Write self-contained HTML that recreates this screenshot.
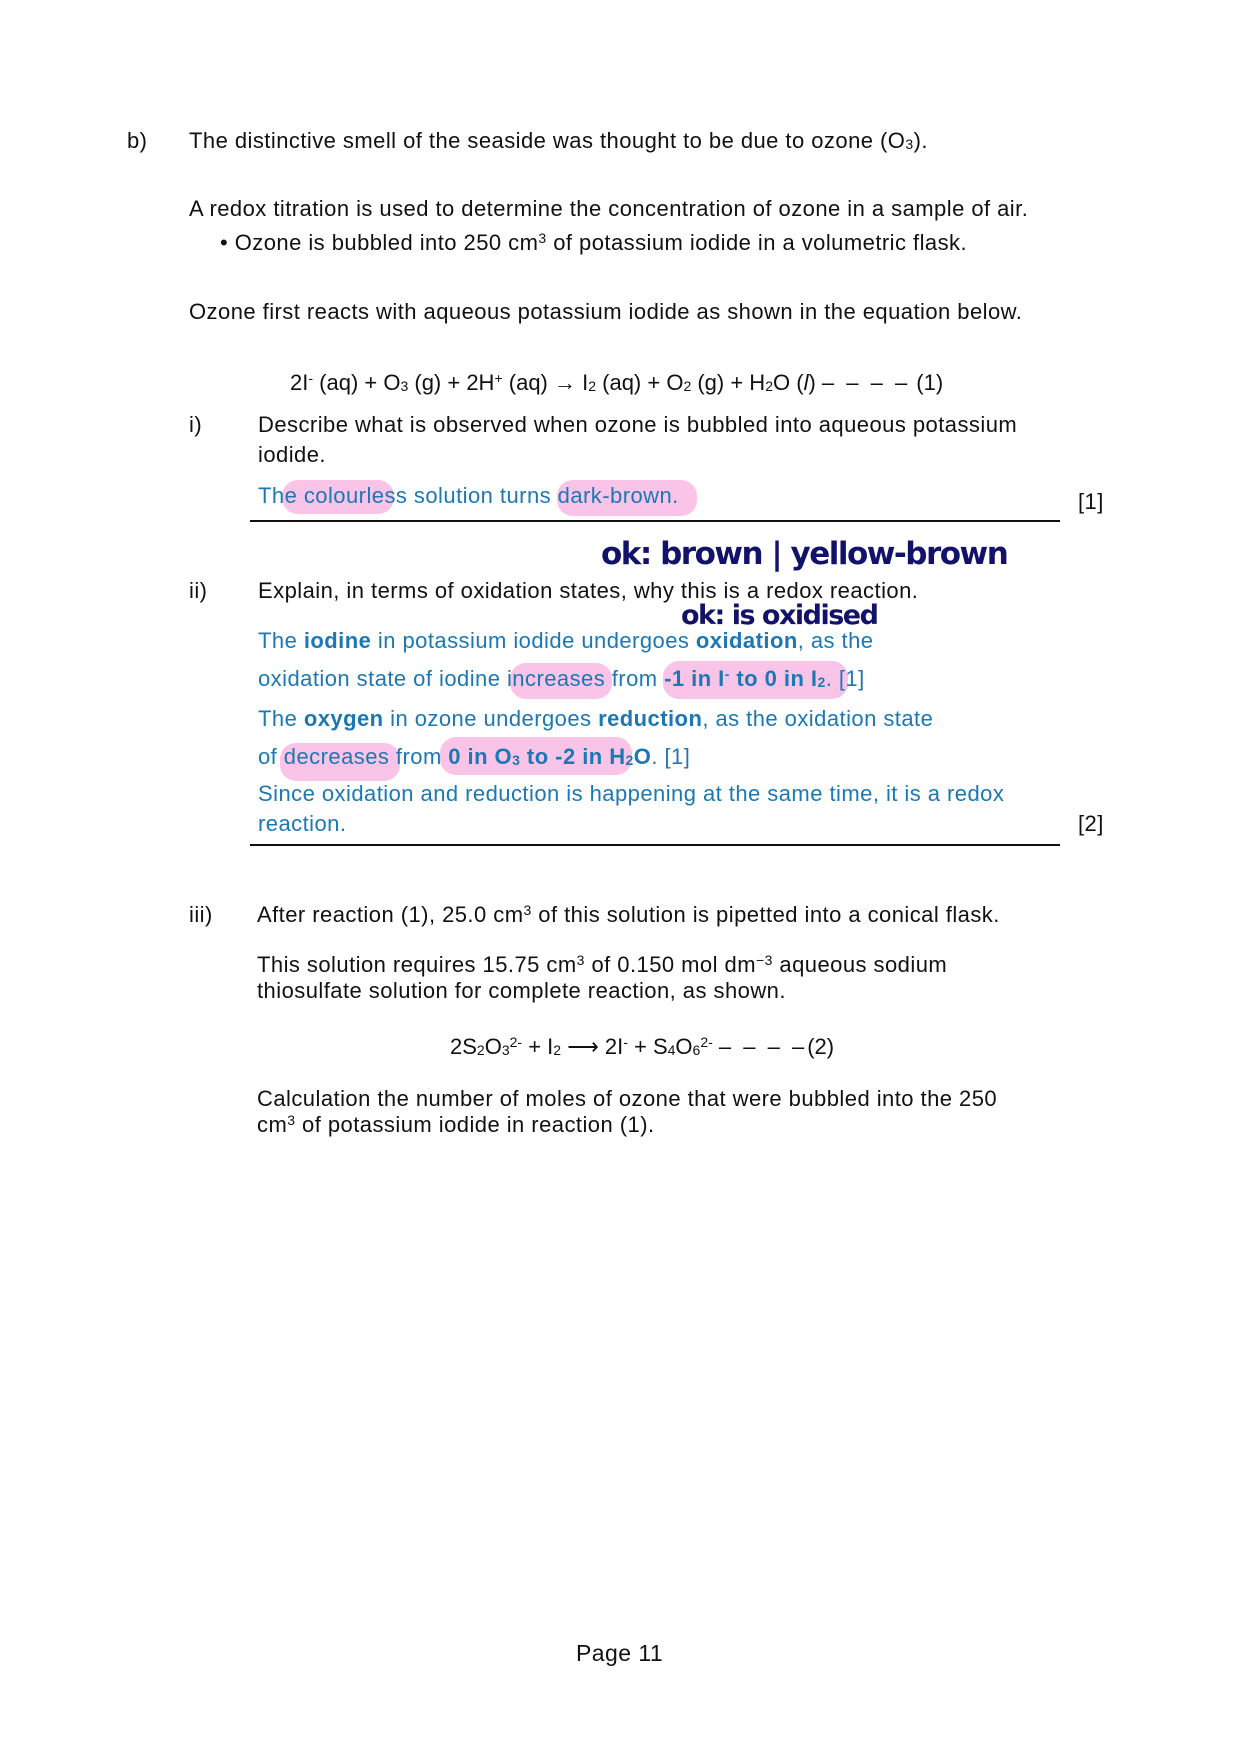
<!DOCTYPE html>
<html><head><meta charset="utf-8"><style>
body{margin:0;width:1241px;height:1756px;background:#fff;position:relative;font-family:"Liberation Sans",Arial,sans-serif;font-size:22px;letter-spacing:0.45px;color:#111;overflow:hidden}
.t{position:absolute;white-space:nowrap;line-height:26px}
.b{color:#1b78b4}
sub,sup{font-size:14px;line-height:0}
sub{vertical-align:-1px}
sup{vertical-align:7px}
.hl{position:absolute;background:#f9c4e8;border-radius:16px}
.hw{position:absolute;white-space:nowrap;color:#12126a;font-family:"DejaVu Sans",sans-serif;font-weight:bold;letter-spacing:-1.5px}
.ln{position:absolute;height:2px;background:#111}
.eq{letter-spacing:0}
.d{letter-spacing:3px}
</style></head><body>
<div class="hl" style="left:282px;top:480px;width:112px;height:34px"></div>
<div class="hl" style="left:557px;top:480px;width:140px;height:36px"></div>
<div class="hl" style="left:510px;top:663px;width:102px;height:36px"></div>
<div class="hl" style="left:663px;top:661px;width:185px;height:38px"></div>
<div class="hl" style="left:280px;top:743px;width:120px;height:38px"></div>
<div class="hl" style="left:440px;top:737px;width:192px;height:38px"></div>

<div class="t" style="left:127px;top:128px">b)</div>
<div class="t" style="left:189px;top:128px">The distinctive smell of the seaside was thought to be due to ozone (O<sub>3</sub>).</div>
<div class="t" style="left:189px;top:196px">A redox titration is used to determine the concentration of ozone in a sample of air.</div>
<div class="t" style="left:220px;top:230px">• Ozone is bubbled into 250 cm<sup>3</sup> of potassium iodide in a volumetric flask.</div>
<div class="t" style="left:189px;top:299px">Ozone first reacts with aqueous potassium iodide as shown in the equation below.</div>
<div class="t eq" style="left:290px;top:370px">2I<sup>-</sup> (aq) + O<sub>3</sub> (g) + 2H<sup>+</sup> (aq) → I<sub>2</sub> (aq) + O<sub>2</sub> (g) + H<sub>2</sub>O (<i>l</i>) <span class="d">– – – –</span> (1)</div>
<div class="t" style="left:189px;top:412px">i)</div>
<div class="t" style="left:258px;top:412px">Describe what is observed when ozone is bubbled into aqueous potassium</div>
<div class="t" style="left:258px;top:442px">iodide.</div>
<div class="t b" style="left:258px;top:483px">The colourless solution turns dark-brown.</div>
<div class="t" style="left:1078px;top:489px">[1]</div>
<div class="ln" style="left:250px;top:520px;width:810px"></div>
<div class="hw" style="left:601px;top:536px;font-size:31px">ok: brown | yellow-brown</div>
<div class="t" style="left:189px;top:578px">ii)</div>
<div class="t" style="left:258px;top:578px">Explain, in terms of oxidation states, why this is a redox reaction.</div>
<div class="hw" style="left:681px;top:600px;font-size:27px">ok: is oxidised</div>
<div class="t b" style="left:258px;top:628px">The <b>iodine</b> in potassium iodide undergoes <b>oxidation</b>, as the</div>
<div class="t b" style="left:258px;top:666px">oxidation state of iodine increases from <b>-1 in I<sup>-</sup> to 0 in I<sub>2</sub></b>. [1]</div>
<div class="t b" style="left:258px;top:706px">The <b>oxygen</b> in ozone undergoes <b>reduction</b>, as the oxidation state</div>
<div class="t b" style="left:258px;top:744px">of decreases from <b>0 in O<sub>3</sub> to -2 in H<sub>2</sub>O</b>. [1]</div>
<div class="t b" style="left:258px;top:781px">Since oxidation and reduction is happening at the same time, it is a redox</div>
<div class="t b" style="left:258px;top:811px">reaction.</div>
<div class="t" style="left:1078px;top:811px">[2]</div>
<div class="ln" style="left:250px;top:844px;width:810px"></div>
<div class="t" style="left:189px;top:902px">iii)</div>
<div class="t" style="left:257px;top:902px">After reaction (1), 25.0 cm<sup>3</sup> of this solution is pipetted into a conical flask.</div>
<div class="t" style="left:257px;top:952px">This solution requires 15.75 cm<sup>3</sup> of 0.150 mol dm<sup>−3</sup> aqueous sodium</div>
<div class="t" style="left:257px;top:978px">thiosulfate solution for complete reaction, as shown.</div>
<div class="t eq" style="left:450px;top:1034px">2S<sub>2</sub>O<sub>3</sub><sup>2-</sup> + I<sub>2</sub> ⟶ 2I<sup>-</sup> + S<sub>4</sub>O<sub>6</sub><sup>2-</sup> <span class="d">– – – –</span>(2)</div>
<div class="t" style="left:257px;top:1086px">Calculation the number of moles of ozone that were bubbled into the 250</div>
<div class="t" style="left:257px;top:1112px">cm<sup>3</sup> of potassium iodide in reaction (1).</div>
<div class="t" style="left:576px;top:1640px;font-size:23px">Page 11</div>
</body></html>
